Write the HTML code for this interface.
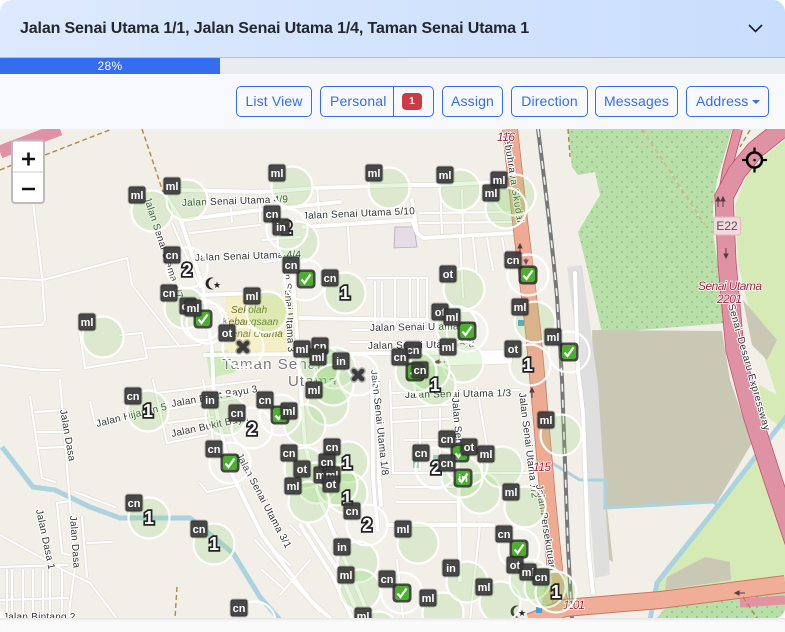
<!DOCTYPE html>
<html lang="en"><head><meta charset="utf-8"><title>Map</title>
<style>
html,body{margin:0;padding:0;width:785px;height:632px;overflow:hidden;background:#fff;font-family:"Liberation Sans",sans-serif}
.head{position:absolute;left:0;top:0;width:785px;height:57px;border-radius:12px 12px 0 0;background:linear-gradient(90deg,#dde9fd,#c9defd);border-bottom:1px solid #aebfdc;box-sizing:content-box}
.title{position:absolute;left:20px;top:19px;font-size:16px;line-height:20px;font-weight:bold;color:#23272e;letter-spacing:-.14px;white-space:nowrap}
.prog{position:absolute;left:0;top:58px;width:785px;height:16px;background:#e9ecef}
.bar{position:absolute;left:0;top:0;width:220px;height:16px;background:#356cf2;color:#fff;font-size:12px;line-height:16px;text-align:center;letter-spacing:.3px}
.tool{position:absolute;left:0;top:74px;width:785px;height:55px;background:#f8f9fc}
.b{position:absolute;top:86px;height:31px;box-sizing:border-box;border:1px solid #356cf2;border-radius:5px;color:#356cf2;font-size:14px;line-height:29px;text-align:center;background:#f8f9fc;letter-spacing:.15px;white-space:nowrap}
.bot{position:absolute;left:0;top:618px;width:785px;height:14px;background:#fafafb;box-shadow:inset 0 3px 3px -2px #ddd}
svg{position:absolute;left:0;top:0}
.r{fill:none;stroke:#fff;stroke-linecap:round;stroke-linejoin:round}
.t{font:10px "Liberation Sans",sans-serif;fill:#333;stroke:#fff;stroke-width:2px;paint-order:stroke;letter-spacing:.25px}
.i{font:italic 12px "Liberation Sans",sans-serif;fill:#a3223f;stroke:#fff;stroke-width:1.500px;paint-order:stroke}
.l{font:bold 11px "Liberation Sans",sans-serif;fill:#fff;text-anchor:middle}
.n{font:bold 18px "Liberation Sans",sans-serif;fill:#fff;stroke:#222;stroke-width:3.500px;paint-order:stroke;text-anchor:middle}
</style></head><body>
<div class="head"><div class="title">Jalan Senai Utama 1/1, Jalan Senai Utama 1/4, Taman Senai Utama 1</div>
<svg style="left:747px;top:21px" width="17" height="15" viewBox="0 0 17 15"><path d="M2 4l6.500 6.500L15 4" fill="none" stroke="#1a1d22" stroke-width="1.600"/></svg></div>
<div class="prog"><div class="bar">28%</div></div>
<div class="tool"></div>
<div class="b" style="left:236px;width:76px">List View</div>
<div class="b" style="left:320px;width:114px;text-align:left;padding-left:9px">Personal<span style="position:absolute;left:72px;top:0;bottom:0;border-left:1px solid #356cf2"></span><span style="position:absolute;left:81px;top:6px;width:20px;height:17px;background:#cc3b45;border-radius:4px;color:#fff;font:bold 10px/17px 'Liberation Sans',sans-serif;text-align:center">1</span></div>
<div class="b" style="left:442px;width:61px">Assign</div>
<div class="b" style="left:511px;width:77px">Direction</div>
<div class="b" style="left:595px;width:83px">Messages</div>
<div class="b" style="left:686px;width:83px;text-align:left;padding-left:9px">Address<span style="position:absolute;left:65px;top:13px;border:4px solid transparent;border-top:4.500px solid #356cf2;border-bottom:0"></span></div>
<div class="bot"></div>

<svg width="785" height="632" viewBox="0 0 785 632">
<defs>
<clipPath id="c"><path d="M0 129H785V608a10 10 0 0 1-10 10H10a10 10 0 0 1-10-10Z"/></clipPath>
<pattern id="o" width="10" height="10" patternUnits="userSpaceOnUse"><rect width="10" height="10" fill="#b9dfa9"/><circle cx="2" cy="2" r=".7" fill="#6f9f74"/><circle cx="7" cy="7" r=".7" fill="#6f9f74"/></pattern>
<g id="b"><rect x="-8.500" y="-8.500" width="17" height="17" rx="2.500" fill="#3a3a3a" fill-opacity=".93" stroke="#000" stroke-opacity=".2" stroke-width="2"/></g>
<g id="k"><rect x="-9.500" y="-9.500" width="19" height="19" rx="4" fill="#1d1d1d" fill-opacity=".8"/><rect x="-7" y="-7" width="14" height="14" rx="2.500" fill="#4cb02f"/><path d="M-4.500 .5L-1.500 4L4.500-4.500" fill="none" stroke="#fff" stroke-width="2.200"/></g>
<g id="x"><path d="M-4-4L4 4M4-4L-4 4" stroke="#000" stroke-opacity=".3" stroke-width="7.500" stroke-linecap="round"/><path d="M-4-4L4 4M4-4L-4 4" stroke="#3c3c3c" stroke-width="4.500" stroke-linecap="round"/></g>
</defs>
<g clip-path="url(#c)">
<rect x="0" y="129" width="785" height="489" fill="#f2efe9"/>
<!-- land -->
<path d="M568 129L572 167L578 175L595 172L600 195L578 232L588 272L602 333L727 323L713 233L713 207L717 180L732 129Z" fill="url(#o)"/>
<path d="M785 140L750 168L735 205L738 263L752 320L785 420V129Z" fill="#d6eab6"/>
<path d="M743 300L777 340L767 360L752 345Z" fill="#c8c8b4"/>
<path d="M592 330L722 331L730 380L752 443L717 502L607 508L613 562L598 553L596 480Z" fill="#c8c8b4"/>
<path d="M745 400L760 385L785 400V430L762 413Z" fill="#d6eab6"/>
<path d="M717 510L762 445L785 510V590L660 605L657 585Z" fill="#d6eab6"/>
<path d="M667 577L705 557L730 562L731 580L665 590Z" fill="#c8c8b4"/>
<path d="M657 618L672 600L785 592V618Z" fill="url(#o)"/>
<path d="M567 267L582 265L598 385L610 575L595 578L583 420L578 350Z" fill="#dfdfdf"/>
<path d="M225 295H300V356H225Z" fill="#f4efc4"/>
<path d="M206 352L228 350L236 372L210 378Z" fill="#cdebb6"/>
<path d="M395 227L414 227L417 247L394 248Z" fill="#e6dce6" stroke="#b7a9ba" stroke-width=".8"/>
<path d="M413 455h7v13h-7ZM433 455h8v15h-8Z" fill="#8ccfb7"/>
<path d="M548 570L565 575L568 610L540 612Z" fill="#d9b98a" fill-opacity=".7"/>
<!-- water -->
<path d="M2 447L33 487L55 490L90 507L120 518L190 518L233 553L260 597L280 620" fill="none" stroke="#aad3df" stroke-width="5"/>
<path d="M545 380L547 460L580 480H605V508L713 502L718 505" fill="none" stroke="#aad3df" stroke-width="3"/>
<path d="M790 412L717 507L657 583L650 620" fill="none" stroke="#aad3df" stroke-width="5"/>
<!-- minor roads -->
<g style="filter:drop-shadow(0 0 .6px #bdb9b0)">
<g class="r" stroke-width="2.200">
<path d="M33 202L42 277L45 320L42 325L0 327M0 278L43 280L127 258L132 285L180 347M80 333L85 368L147 358L142 333L120 335M147 348L200 345"/>
<path d="M0 365L42 370M42 370H60M60 380L75 567L68 620M30 397L42 478L55 482M35 412L63 410M37 432L67 432M38 448L67 447M75 492L115 507M57 503L62 553L70 555M57 503L70 501M82 517L87 577M87 543L112 542"/>
<path d="M0 535L67 572L90 583L118 620M0 567L67 565M0 600L68 598M7 570V618M12 570V618M23 570V618M33 570V618M43 570V618M50 570V618M62 570V618"/>
<path d="M90 402L95 423L110 420M153 380L167 443L207 435M157 393L260 380M163 410L243 397M167 423L213 417M200 483L207 492L240 485M203 380L213 440M236 480L243 495"/>
<path d="M172 223L200 287M190 233L260 225M200 295L260 293M230 197L232 222M260 190V222M263 240L300 237M263 262L300 258M317 188L320 222M348 227L350 263M367 278H427V320M375 282V325M382 282V325M395 280V325M410 280V325M418 280V325M352 330L433 330M350 342H433"/>
<path d="M420 213L513 212M420 223L513 222M440 185L442 233M462 190L463 233M460 238L463 297M473 238L477 275M487 238L493 270M502 238L507 265"/>
<path d="M390 380L393 473M390 393L520 390M391 408L460 404M392 422L460 418M393 473L527 473M396 487L460 487M397 502L460 502M477 387L487 447M420 410V470M440 408V470M404 440L470 440M480 525L470 620M397 560L403 618"/>
<path d="M270 547L290 565M262 570L285 590M280 595L310 560M255 540L320 612M290 525L300 535"/>
</g>
<!-- medium roads -->
<g class="r" stroke-width="4">
<path d="M180 190L260 192L317 188L407 185L440 185L493 182M182 220L260 210L340 202M303 227L412 220L417 233L423 238L513 233M412 200L417 233"/>
<path d="M163 193L180 218L203 287L212 350L214 400L230 470L262 535L310 600L330 618"/>
<path d="M292 263L297 337L300 380L305 445L320 500L345 560L370 618"/>
<path d="M200 295L260 293M205 355L520 352M300 318L427 320"/>
<path d="M372 380L373 477L375 503L378 530M378 380L379 477L381 505M387 525H493M457 410L460 580"/>
<path d="M307 523L340 573L360 618M300 525L332 575L352 618"/>
<path d="M575 273L578 370L583 413L588 547L593 593"/>
</g>
<path d="M440 359L512 357" stroke="#fff" stroke-width="13" fill="none"/>
</g>
<!-- railway -->
<path d="M538 129Q552 240 557 297L562 380L568 547L572 620" fill="none" stroke="#777" stroke-width="4"/>
<path d="M538 129Q552 240 557 297L562 380L568 547L572 620" fill="none" stroke="#eee" stroke-width="1.600" stroke-dasharray="8 8"/>
<!-- trunk -->
<path d="M510 129L521 230L533 330L541 420L548 500L557 590L562 606" fill="none" stroke="#c9765f" stroke-width="16"/>
<path d="M510 129L521 230L533 330L541 420L548 500L557 590L562 606" fill="none" stroke="#efab92" stroke-width="14.500"/>
<path d="M530 622L565 608L660 600L785 584" fill="none" stroke="#c9765f" stroke-width="18"/>
<path d="M530 622L565 608L660 600L785 584" fill="none" stroke="#f0ad98" stroke-width="16"/>
<!-- motorway -->
<path d="M785 600L740 603" fill="none" stroke="#e392a4" stroke-width="9"/>
<path d="M738 129L727 170L722 200" fill="none" stroke="#d0576f" stroke-width="10"/>
<path d="M738 129L727 170L722 200" fill="none" stroke="#e392a4" stroke-width="8"/>
<path d="M790 122L755 150L737 172L724 197L727 263L735 350L752 415L773 480L800 560" fill="none" stroke="#c24a66" stroke-width="19"/>
<path d="M790 122L755 150L737 172L724 197L727 263L735 350L752 415L773 480L800 560" fill="none" stroke="#e092a5" stroke-width="17.500"/>
<path d="M0 152L60 129" fill="none" stroke="#e092a5" stroke-width="13"/>
<!-- dashed tracks -->
<g fill="none" stroke="#b08a3e" stroke-width="1.400" stroke-dasharray="5 3">
<path d="M45 155L112 129M142 129L163 192M642 129L705 225M568 129L570 157M750 130L740 147M177 587L175 618M743 597L757 618M0 170L12 165"/>
</g>
<path d="M642 129L705 225" fill="none" stroke="#e8e5cc" stroke-width="1" opacity=".7"/>
<!-- labels on map -->
<text class="t" x="182" y="206" transform="rotate(-2 182 206)">Jalan Senai Utama 4/9</text>
<text class="t" x="195" y="261" transform="rotate(-2 195 261)">Jalan Senai Utama 4/4</text>
<text class="t" x="303" y="219" transform="rotate(-2.500 303 219)">Jalan Senai Utama 5/10</text>
<text class="t" x="144" y="198" transform="rotate(72 144 198)">Jalan Senai Utama 4/7</text>
<text class="t" x="370" y="331" transform="rotate(-1 370 331)">Jalan Senai Utama 5/7</text>
<text class="t" x="368" y="349" transform="rotate(-1 368 349)">Jalan Senai Utama 5/8</text>
<text class="t" x="405" y="398" transform="rotate(-1 405 398)">Jalan Senai Utama 1/3</text>
<text class="t" x="172" y="407" transform="rotate(-10 172 407)">Jalan Bukit Bayu 3</text>
<text class="t" x="172" y="437" transform="rotate(-12 172 437)">Jalan Bukit Bayu</text>
<text class="t" x="97" y="427" transform="rotate(-14 97 427)">Jalan Hijauan 5</text>
<text class="t" x="60" y="410" transform="rotate(80 60 410)">Jalan Dasa</text>
<text class="t" x="70" y="516" transform="rotate(86 70 516)">Jalan Dasa</text>
<text class="t" x="36" y="510" transform="rotate(78 36 510)">Jalan Dasa 1</text>
<text class="t" x="3" y="620">Jalan Bintang 2</text>
<text class="t" x="371" y="370" transform="rotate(84 371 370)">Jalan Senai Utama 1/8</text>
<text class="t" x="283" y="255" transform="rotate(87 283 255)">Jalan Senai Utama 3</text>
<text class="t" x="236" y="455" transform="rotate(62 236 455)">Jalan Senai Utama 3/1</text>
<text class="t" x="503" y="133" transform="rotate(81 503 133)" style="letter-spacing:.7px">Lebuhraya Skudai</text>
<text class="t" x="519" y="393" transform="rotate(83 519 393)">Jalan Senai Utama 1/2</text>
<text class="t" x="536" y="485" transform="rotate(81 536 485)">Jalan Persekutuan</text>
<text class="t" x="728" y="305" transform="rotate(74 728 305)" style="letter-spacing:.5px">Senai–Desaru Expressway</text>
<text class="t" x="452" y="398" transform="rotate(85 452 398)" >Jalan Senai</text>
<text class="i" x="698" y="290" textLength="64">Senai Utama</text>
<text class="i" x="717" y="303" textLength="25">2201</text>
<text class="i" x="497" y="141" textLength="18">116</text>
<text class="i" x="533" y="471" textLength="18">115</text>
<text class="i" x="563" y="609" textLength="22">1101</text>
<rect x="713.500" y="217" width="27" height="18" rx="2.500" fill="#f4d9de" stroke="#e4b4bf"/>
<text x="727" y="230" text-anchor="middle" style="font:12px 'Liberation Sans',sans-serif;fill:#555">E22</text>
<text x="222" y="369" style="font:15px 'Liberation Sans',sans-serif;fill:#777;stroke:#fff;stroke-width:2px;paint-order:stroke;letter-spacing:1.100px">Taman Senai</text>
<text x="288" y="386" style="font:15px 'Liberation Sans',sans-serif;fill:#777;stroke:#fff;stroke-width:2px;paint-order:stroke;letter-spacing:1.100px">Utama</text>
<g style="font:italic 10px 'Liberation Sans',sans-serif;fill:#68752a">
<text x="231" y="313">Sekolah</text><text x="222" y="325">Kebangsaan</text><text x="225" y="337">Senai Utama</text></g>
<!-- poi -->
<path d="M214 278a6 6 0 1 0 0 11a5 5 0 1 1 0-11Z" fill="#222"/><text x="213" y="288" style="font:9px 'DejaVu Sans',sans-serif;fill:#222">★</text>
<path d="M519 606a6 6 0 1 0 0 11a5 5 0 1 1 0-11Z" fill="#222"/><text x="518" y="616" style="font:9px 'DejaVu Sans',sans-serif;fill:#222">★</text>
<rect x="518" y="320" width="6" height="6" fill="#4a9fd0"/><rect x="536" y="607" width="6" height="6" fill="#4a9fd0"/>
<g stroke="#5a3a44" stroke-width="1" fill="#5a3a44"><path d="M718 207v-9M723 207v-9" /><path d="M716 201l2-4 2 4ZM721 201l2-4 2 4ZM726 248v9"/><path d="M724 254l2 4 2-4Z"/><path d="M520 245v9M518 248l2-4 2 4ZM526 258v6M524 260l2 4 2-4ZM532 398v-9M530 392l2-4 2 4ZM745 593h-10M739 591l-4 2 4 2Z"/><path d="M445 362h-10M439 360l-4 2 4 2Z"/></g>

<!-- coverage circles -->
<g fill="#8ed86f" fill-opacity=".22" stroke="#fff" stroke-width="2.200" stroke-opacity=".95">
<circle cx="103" cy="337" r="20.500"/><circle cx="152" cy="211" r="20.500"/><circle cx="187" cy="200" r="20.500"/><circle cx="185" cy="308" r="20.500"/><circle cx="267" cy="312" r="20.500"/><circle cx="292" cy="187" r="20.500"/><circle cx="389" cy="188" r="20.500"/><circle cx="460" cy="190" r="20.500"/><circle cx="515" cy="195" r="20.500"/><circle cx="506" cy="208" r="20.500"/><circle cx="298" cy="242" r="20.500"/><circle cx="345" cy="293" r="20.500"/><circle cx="464" cy="289" r="20.500"/><circle cx="457" cy="327" r="20.500"/><circle cx="463" cy="362" r="20.500"/><circle cx="328" cy="405" r="20.500"/><circle cx="305" cy="425" r="20.500"/><circle cx="348" cy="462" r="20.500"/><circle cx="305" cy="468" r="20.500"/><circle cx="317" cy="483" r="20.500"/><circle cx="347" cy="493" r="20.500"/><circle cx="337" cy="485" r="20.500"/><circle cx="309" cy="502" r="20.500"/><circle cx="418" cy="543" r="20.500"/><circle cx="358" cy="562" r="20.500"/><circle cx="360" cy="590" r="20.500"/><circle cx="443" cy="613" r="20.500"/><circle cx="467" cy="582" r="20.500"/><circle cx="500" cy="602" r="20.500"/><circle cx="378" cy="632" r="20.500"/><circle cx="226" cy="415" r="20.500"/><circle cx="148" cy="411" r="20.500"/><circle cx="149" cy="518" r="20.500"/><circle cx="214" cy="544" r="20.500"/><circle cx="535" cy="322" r="20.500"/><circle cx="561" cy="435" r="20.500"/><circle cx="525" cy="507" r="20.500"/><circle cx="480" cy="493" r="20.500"/><circle cx="502" cy="467" r="20.500"/><circle cx="462" cy="477" r="20.500"/><circle cx="530" cy="580" r="20.500"/><circle cx="545" cy="587" r="20.500"/><circle cx="556" cy="592" r="20.500"/><circle cx="530" cy="365" r="20.500" fill-opacity=".08"/><circle cx="435" cy="385" r="20.500"/><circle cx="429" cy="370" r="20.500"/><circle cx="416" cy="372" r="20.500"/><circle cx="335" cy="368" r="20.500"/><circle cx="320" cy="365" r="20.500"/><circle cx="333" cy="385" r="20.500"/>
</g>
<g fill="#fff" fill-opacity=".12" stroke="#fff" stroke-width="2.200" stroke-opacity=".95">
<circle cx="187" cy="268" r="20.500"/><circle cx="207" cy="323" r="20.500"/><circle cx="202" cy="320" r="20.500"/><circle cx="243" cy="347" r="20.500"/><circle cx="287" cy="229" r="20.500"/><circle cx="305" cy="280" r="20.500"/><circle cx="528" cy="275" r="20.500"/><circle cx="569" cy="352" r="20.500"/><circle cx="230" cy="463" r="20.500"/><circle cx="252" cy="428" r="20.500"/><circle cx="280" cy="415" r="20.500"/><circle cx="367" cy="525" r="20.500"/><circle cx="436" cy="468" r="20.500"/><circle cx="402" cy="593" r="20.500"/><circle cx="519" cy="549" r="20.500"/><circle cx="358" cy="375" r="20.500"/><circle cx="255" cy="622" r="20.500"/><circle cx="467" cy="465" r="20.500"/><circle cx="467" cy="331" r="20.500"/>
</g>
<!-- status icons -->
<use href="#k" x="203" y="319"/><use href="#k" x="306" y="279"/><use href="#k" x="467" y="331"/><use href="#k" x="528" y="275"/><use href="#k" x="569" y="352"/><use href="#k" x="230" y="463"/><use href="#k" x="280" y="415"/><use href="#k" x="415" y="372"/><use href="#k" x="460" y="453"/><use href="#k" x="463" y="478"/><use href="#k" x="519" y="549"/><use href="#k" x="402" y="593"/><use href="#k" x="255" y="628"/>
<use href="#x" x="243" y="347"/><use href="#x" x="358" y="375"/>
<!-- cluster numbers -->
<text class="n" x="187" y="276">2</text><text class="n" x="287" y="234">2</text><text class="n" x="345" y="299">1</text><text class="n" x="148" y="417">1</text><text class="n" x="252" y="435">2</text><text class="n" x="149" y="524">1</text><text class="n" x="214" y="550">1</text><text class="n" x="347" y="469">1</text><text class="n" x="347" y="504">1</text><text class="n" x="367" y="531">2</text><text class="n" x="436" y="474">2</text><text class="n" x="435" y="391">1</text><text class="n" x="528" y="371">1</text><text class="n" x="556" y="598">1</text>
<!-- type tags -->
<use href="#b" x="87" y="322"/><text class="l" x="87" y="326">ml</text>
<use href="#b" x="137" y="195"/><text class="l" x="137" y="199">ml</text>
<use href="#b" x="172" y="186"/><text class="l" x="172" y="190">ml</text>
<use href="#b" x="172" y="255"/><text class="l" x="172" y="259">cn</text>
<use href="#b" x="169" y="293"/><text class="l" x="169" y="297">cn</text>
<use href="#b" x="188" y="306"/><text class="l" x="188" y="310">cn</text>
<use href="#b" x="193" y="308"/><text class="l" x="193" y="312">ml</text>
<use href="#b" x="252" y="296"/><text class="l" x="252" y="300">ml</text>
<use href="#b" x="227" y="333"/><text class="l" x="227" y="337">ot</text>
<use href="#b" x="277" y="173"/><text class="l" x="277" y="177">ml</text>
<use href="#b" x="374" y="173"/><text class="l" x="374" y="177">ml</text>
<use href="#b" x="445" y="175"/><text class="l" x="445" y="179">ml</text>
<use href="#b" x="499" y="180"/><text class="l" x="499" y="184">ml</text>
<use href="#b" x="491" y="193"/><text class="l" x="491" y="197">ml</text>
<use href="#b" x="272" y="214"/><text class="l" x="272" y="218">cn</text>
<use href="#b" x="281" y="227"/><text class="l" x="281" y="231">in</text>
<use href="#b" x="291" y="265"/><text class="l" x="291" y="269">cn</text>
<use href="#b" x="330" y="278"/><text class="l" x="330" y="282">cn</text>
<use href="#b" x="448" y="274"/><text class="l" x="448" y="278">ot</text>
<use href="#b" x="440" y="312"/><text class="l" x="440" y="316">ot</text>
<use href="#b" x="452" y="317"/><text class="l" x="452" y="321">ml</text>
<use href="#b" x="448" y="347"/><text class="l" x="448" y="351">ml</text>
<use href="#b" x="413" y="350"/><text class="l" x="413" y="354">cn</text>
<use href="#b" x="400" y="357"/><text class="l" x="400" y="361">cn</text>
<use href="#b" x="420" y="370"/><text class="l" x="420" y="374">cn</text>
<use href="#b" x="320" y="346"/><text class="l" x="320" y="350">cn</text>
<use href="#b" x="302" y="349"/><text class="l" x="302" y="353">ml</text>
<use href="#b" x="318" y="357"/><text class="l" x="318" y="361">ml</text>
<use href="#b" x="341" y="361"/><text class="l" x="341" y="365">in</text>
<use href="#b" x="513" y="349"/><text class="l" x="513" y="353">ot</text>
<use href="#b" x="513" y="260"/><text class="l" x="513" y="264">cn</text>
<use href="#b" x="520" y="307"/><text class="l" x="520" y="311">ml</text>
<use href="#b" x="553" y="337"/><text class="l" x="553" y="341">ml</text>
<use href="#b" x="133" y="396"/><text class="l" x="133" y="400">cn</text>
<use href="#b" x="210" y="400"/><text class="l" x="210" y="404">in</text>
<use href="#b" x="237" y="413"/><text class="l" x="237" y="417">cn</text>
<use href="#b" x="214" y="449"/><text class="l" x="214" y="453">cn</text>
<use href="#b" x="134" y="503"/><text class="l" x="134" y="507">cn</text>
<use href="#b" x="199" y="529"/><text class="l" x="199" y="533">cn</text>
<use href="#b" x="239" y="608"/><text class="l" x="239" y="612">cn</text>
<use href="#b" x="314" y="390"/><text class="l" x="314" y="394">ml</text>
<use href="#b" x="265" y="400"/><text class="l" x="265" y="404">cn</text>
<use href="#b" x="289" y="411"/><text class="l" x="289" y="415">ml</text>
<use href="#b" x="332" y="447"/><text class="l" x="332" y="451">cn</text>
<use href="#b" x="289" y="453"/><text class="l" x="289" y="457">cn</text>
<use href="#b" x="327" y="462"/><text class="l" x="327" y="466">cn</text>
<use href="#b" x="302" y="469"/><text class="l" x="302" y="473">ot</text>
<use href="#b" x="322" y="475"/><text class="l" x="322" y="479">ml</text>
<use href="#b" x="332" y="475"/><text class="l" x="332" y="479">ml</text>
<use href="#b" x="331" y="484"/><text class="l" x="331" y="488">ot</text>
<use href="#b" x="293" y="486"/><text class="l" x="293" y="490">ml</text>
<use href="#b" x="352" y="511"/><text class="l" x="352" y="515">cn</text>
<use href="#b" x="403" y="529"/><text class="l" x="403" y="533">ml</text>
<use href="#b" x="342" y="547"/><text class="l" x="342" y="551">in</text>
<use href="#b" x="346" y="575"/><text class="l" x="346" y="579">ml</text>
<use href="#b" x="387" y="579"/><text class="l" x="387" y="583">cn</text>
<use href="#b" x="428" y="598"/><text class="l" x="428" y="602">ml</text>
<use href="#b" x="451" y="568"/><text class="l" x="451" y="572">in</text>
<use href="#b" x="484" y="587"/><text class="l" x="484" y="591">ml</text>
<use href="#b" x="363" y="616"/><text class="l" x="363" y="620">ml</text>
<use href="#b" x="421" y="453"/><text class="l" x="421" y="457">cn</text>
<use href="#b" x="447" y="439"/><text class="l" x="447" y="443">cn</text>
<use href="#b" x="469" y="447"/><text class="l" x="469" y="451">ot</text>
<use href="#b" x="486" y="454"/><text class="l" x="486" y="458">ml</text>
<use href="#b" x="447" y="463"/><text class="l" x="447" y="467">cn</text>
<text class="l" x="463" y="482">in</text>
<use href="#b" x="511" y="492"/><text class="l" x="511" y="496">ml</text>
<use href="#b" x="546" y="420"/><text class="l" x="546" y="424">ml</text>
<use href="#b" x="504" y="534"/><text class="l" x="504" y="538">cn</text>
<use href="#b" x="515" y="565"/><text class="l" x="515" y="569">ot</text>
<use href="#b" x="528" y="572"/><text class="l" x="528" y="576">ml</text>
<use href="#b" x="541" y="577"/><text class="l" x="541" y="581">cn</text>
<!-- map controls -->
<rect x="12" y="140.500" width="32" height="62.500" rx="3" fill="#fff" stroke="#bcbcbc" stroke-width="2"/>
<path d="M13 172H43" stroke="#ccc" stroke-width="1"/>
<path d="M22 159H35M28.500 152.500V165.500M22 189H35" stroke="#111" stroke-width="2.600"/>
<circle cx="754.500" cy="160" r="7.500" fill="none" stroke="#000" stroke-width="2.600"/>
<circle cx="754.500" cy="160" r="1.300" fill="#000"/>
<path d="M754.500 147.500V153.500M754.500 166.500V172.500M742 160H748M761 160H767" stroke="#000" stroke-width="2.200"/>
</g>
</svg>
</body></html>
